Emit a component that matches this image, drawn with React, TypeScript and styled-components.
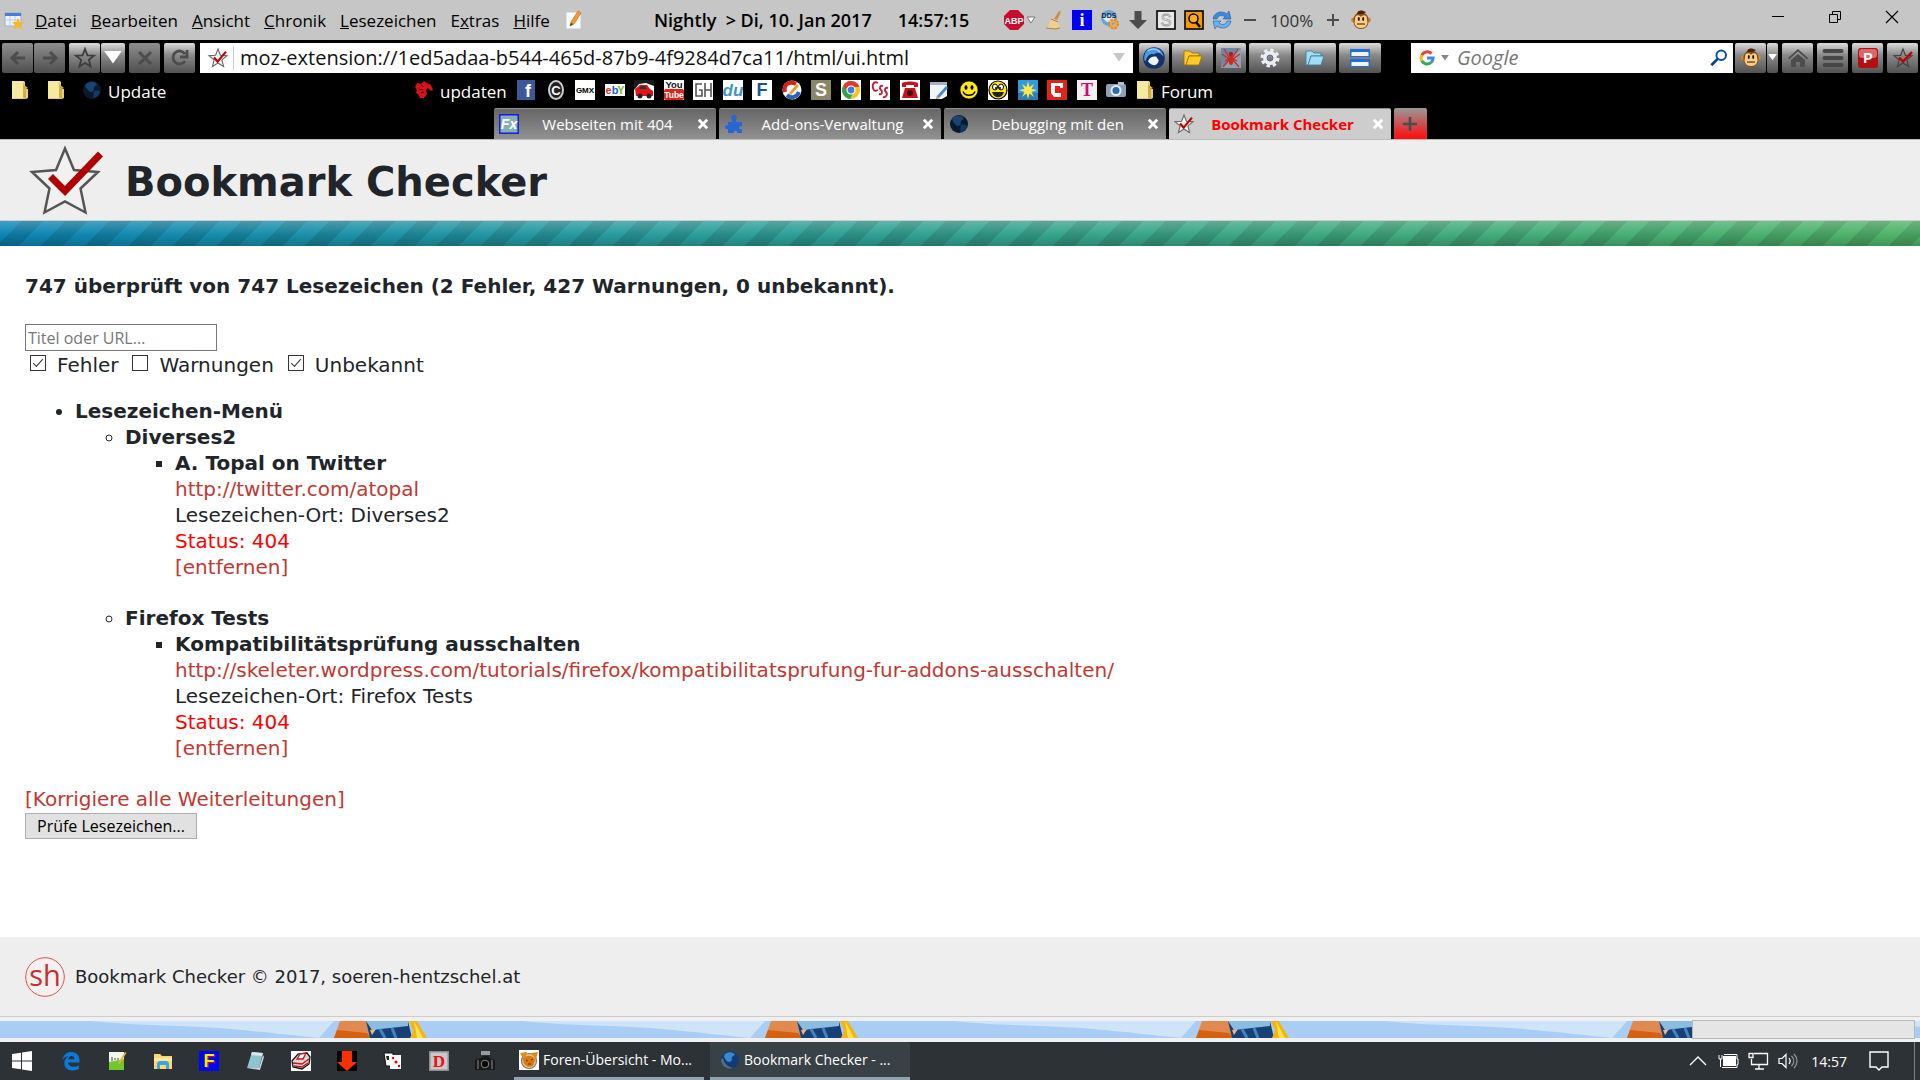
import React, { useState } from 'react';
import styled, { createGlobalStyle, css } from 'styled-components';

const GlobalStyle = createGlobalStyle`
  *, *::before, *::after { box-sizing: border-box; }
  body { margin: 0; background: #fff; font-family: "Open Sans", "Noto Sans", sans-serif; }
  button, input { font: inherit; color: inherit; }
  button { cursor: pointer; }
  ul { margin: 0; padding: 0; list-style: none; }
  svg { flex: none; overflow: visible; }
`;

/* ---------- icons ---------- */

const Svg = ({ size = 20, children }: { size?: number; children: React.ReactNode }) => (
  <svg width={size} height={size} viewBox="0 0 20 20" aria-hidden="true">{children}</svg>
);

const Letters = ({ x = 10, y = 14, s = 10, fill = '#fff', children, serif }: {
  x?: number; y?: number; s?: number; fill?: string; children: string; serif?: boolean;
}) => (
  <text x={x} y={y} fontSize={s} fill={fill} fontWeight="bold" textAnchor="middle"
    fontFamily={serif ? '"Liberation Serif", serif' : '"Liberation Sans", sans-serif'}>{children}</text>
);

const STAR = '10,1 12.4,7.3 19,7.7 13.9,11.9 15.6,18.6 10,15 4.4,18.6 6.1,11.9 1,7.7 7.6,7.3';

const CheckStar = ({ size = 20 }: { size?: number }) => (
  <Svg size={size}>
    <polygon points={STAR} fill="#f4f4f4" stroke="#666" strokeWidth="1.1" />
    <path d="M6 9.5 L9.6 13.6 L18 3.6" fill="none" stroke="#c00000" strokeWidth="2.2" />
  </Svg>
);

const Folder = () => (
  <Svg>
    <path d="M2 1h12l1 1v7h3v9l-2 1H2z" fill="#e8cf6e" />
    <path d="M2 1h11v17H2z" fill="#f6e9a0" />
    <path d="M13 4v14l3 1V9l2-1" fill="#cfae46" />
  </Svg>
);

const Globe = () => (
  <Svg>
    <circle cx="10" cy="10" r="9" fill="#0a1a2e" />
    <path d="M4 4c4-3 9-3 11 1-3 1-4 3-3 5-2 3-5 2-6 0S2 7 4 4z" fill="#1a4474" />
    <path d="M12 11c3-1 5 0 6 1-1 3-4 6-7 6 1-3 0-5 1-7z" fill="#123a66" />
  </Svg>
);

const BrightGlobe = () => (
  <Svg>
    <circle cx="10" cy="10" r="9" fill="#123c78" />
    <path d="M5 4c4-3 9-2 10 1-3 1-4 3-3 5-2 3-5 2-6 0S3 7 5 4z" fill="#3b88c9" />
    <path d="M1 10a9 9 0 0 0 12 8C8 17 4 14 3 8z" fill="#5b6c7c" />
  </Svg>
);

const Monkey = () => (
  <Svg>
    <circle cx="2.500" cy="10" r="2.400" fill="#c98732" /><circle cx="17.500" cy="10" r="2.400" fill="#c98732" />
    <path d="M2.500 11C2 5 6 2.500 10 2.500S18 5 17.500 11c0 5-3 8-7.500 8s-7.500-3-7.500-8z" fill="#8a4d18" />
    <path d="M6 4c0-3 3-4 5-3.500L15 2l-3 2z" fill="#4a2307" />
    <path d="M4 9c0-5 5-4 6-2 1-2 6-3 6 2 0 2 1 3.500 0 5.500-1 2.500-3 3.500-6 3.500s-5-1-6-3.500C3 12.500 4 11 4 9z" fill="#f8cf85" />
    <ellipse cx="7.800" cy="9" rx="1" ry="2" fill="#241104" /><ellipse cx="12.200" cy="9" rx="1" ry="2" fill="#241104" />
    <path d="M6 14h8" stroke="#5c2f10" strokeWidth="1.200" />
  </Svg>
);

const MenuTable = () => (
  <Svg>
    <rect x="1" y="3" width="16" height="13" fill="#eef4fc" stroke="#8fb0de" />
    <path d="M1 3h16v3H1z" fill="#4a7fd0" /><path d="M6 6v10M11 6v10M1 10h16" stroke="#b7cbe8" />
    <polygon points="14,8 15.800,12 20,12.300 17,15 18,19.500 14,17 10,19.500 11,15 8,12.300 12.200,12" fill="#fbb917" />
  </Svg>
);

const NotePencil = () => (
  <Svg>
    <path d="M2 2h12l3 3v14H2z" fill="#fbfbfd" stroke="#c2c7d2" />
    <path d="M6 16l1-4L14 1l3 2-7 11z" fill="#f59a23" stroke="#b56813" strokeWidth=".6" /><path d="M6 16l1-3 2 1z" fill="#333" />
  </Svg>
);

const Abp = () => (
  <Svg>
    <polygon points="6,0 14,0 20,6 20,14 14,20 6,20 0,14 0,6" fill="#c70d2c" />
    <Letters y={13.5} s={9}>ABP</Letters>
  </Svg>
);
const Broom = () => (
  <Svg>
    <path d="M15 1l2 1-4 8-3-1z" fill="#c98d4a" />
    <path d="M7 8l7 3 2 7-5 1-9-1c3-2 4-5 5-10z" fill="#efd08c" /><path d="M2 18l9 1 5-1M7 9l7 3" stroke="#b07a5a" fill="none" />
  </Svg>
);
const Info = () => (<Svg><rect width="20" height="20" fill="#0000f5" /><Letters y={16} s={18} serif>i</Letters></Svg>);
const Dds = () => (
  <Svg>
    <circle cx="9" cy="8" r="8" fill="#62a7d8" /><path d="M3 8c3-4 8-4 12 0-1 5-8 7-12 0z" fill="#d7ecf8" />
    <Letters x={9} y={8} s={7} fill="#223">DDS</Letters>
    <circle cx="13.500" cy="14" r="4" fill="none" stroke="#e58a1c" strokeWidth="3" strokeDasharray="2.300 .8" /><circle cx="13.500" cy="14" r="2.600" fill="none" stroke="#f3a73b" strokeWidth="2" />
  </Svg>
);
const DownArrow = () => (<Svg><path d="M6.500 1h7v9H19l-9 9-9-9h5.500z" fill="#4c4c4c" /></Svg>);
const SBox = () => (
  <Svg><rect x="1" y="1" width="18" height="18" fill="#e8e8e8" stroke="#000" strokeWidth="1.600" /><text x="10" y="16" fontSize="16" textAnchor="middle" fill="#fff" stroke="#999" strokeWidth=".8" fontFamily="Liberation Sans">S</text></Svg>
);
const SearchBox = () => (
  <Svg><rect x="1" y="1" width="18" height="18" fill="#f79a00" stroke="#000" strokeWidth="1.600" /><circle cx="9.500" cy="8.500" r="4.500" fill="#ffae1c" stroke="#000" strokeWidth="1.500" /><path d="M12 12l4 5" stroke="#000" strokeWidth="2.400" /></Svg>
);
const Refresh = () => (
  <Svg>
    <path d="M1 9c1-7 9-9 14-5l2-3 2 8-8 0 2-2C9 4 6 6 5 9z" fill="#3a8be0" stroke="#1c5aa8" strokeWidth=".6" />
    <path d="M19 11c-1 7-9 9-14 5l-2 3-2-8h8l-2 2c4 3 7 1 8-2z" fill="#69b1f2" stroke="#1c5aa8" strokeWidth=".6" />
  </Svg>
);

const Line = ({ d, color = '#4c4c4c', w = 2.5 }: { d: string; color?: string; w?: number }) => (
  <Svg><path d={d} fill="none" stroke={color} strokeWidth={w} /></Svg>
);

const Thunder = () => (
  <Svg size={24}><path d="M10 1c5 0 9 3 9 9s-4 9-9 9c-6 0-9-4-9-9 0-3 1-5 3-7 2-1 3-2 6-2z" fill="#12346a" /><path d="M3 5C7-1 17 1 18 9c-3-4-6-4-8-2-3-1-6 1-7 6-2-2-1-5 0-8z" fill="#4c9be0" /><path d="M5 13c1-3 3-5 7-4l2 3c-1 4-5 6-9 1z" fill="#eef1f4" /><path d="M5 4c3-2 7-2 10 1" stroke="#a9d4f7" fill="none" /></Svg>
);
const OpenFolder = ({ c, d }: { c: string; d: string }) => (
  <Svg><path d="M1 3h6l2 2h7v3H6L3 17H1z" fill={c} stroke={d} strokeWidth=".8" /><path d="M6 8h13l-3 9H3z" fill={c} stroke={d} strokeWidth=".8" /></Svg>
);
const Spider = () => (
  <Svg><path d="M0 0h20v20H0z" fill="#6d89a8" /><path d="M0 20L20 0v20z" fill="#8ea2b6" /><path d="M3 1l5 8M17 1l-5 8M1 6l7 5M19 6l-7 5M2 19l6-7M18 19l-6-7M4 13l5-3M16 13l-5-3" stroke="#d4281c" strokeWidth="1.300" /><ellipse cx="10" cy="12" rx="2.400" ry="5" fill="#d4281c" /><circle cx="10" cy="6" r="2.200" fill="#b51d14" /></Svg>
);
const Gear = () => (
  <Svg><circle cx="10" cy="10" r="8" fill="none" stroke="#e9eef4" strokeWidth="3" strokeDasharray="3.400 2.883" /><circle cx="10" cy="10" r="5" fill="none" stroke="#e9eef4" strokeWidth="4" /><circle cx="10" cy="10" r="3" fill="none" stroke="#5f6b78" /></Svg>
);
const Panels = () => (
  <Svg><path d="M0 1h20v8H0zM0 11h20v8H0z" fill="#1e6fe0" /><path d="M1.500 4h17v4h-17zM1.500 14h17v4h-17z" fill="#eef5ff" /><path d="M16 2h2M16 12h2" stroke="#e33" strokeWidth="1.500" /></Svg>
);
const Google = () => (
  <Svg size={16}><g fill="none" strokeWidth="3.800"><path d="M3.400 6.500A7.600 7.600 0 0 1 15.600 4.600" stroke="#ea4335" /><path d="M3.400 6.500a7.600 7.600 0 0 0 0 7" stroke="#fbbc05" /><path d="M3.400 13.500A7.600 7.600 0 0 0 15 15.700" stroke="#34a853" /><path d="M15 15.700A7.600 7.600 0 0 0 17.600 10H10" stroke="#4285f4" /></g></Svg>
);
const Magnifier = () => (<Svg size={18}><circle cx="12.500" cy="7" r="5.300" fill="none" stroke="#0a50a8" strokeWidth="2.200" /><path d="M8.500 11L1.500 18" stroke="#0a3f8c" strokeWidth="3" /></Svg>);
const Home = () => (<Svg><path d="M10 1l10 9-1 1.500-9-8-9 8L0 10z" fill="#4c4c4c" /><path d="M10 6l7 6v7h-5v-5H8v5H3v-7z" fill="#4c4c4c" /></Svg>);
const Burger = () => (<Svg><path d="M1.500 3h17M1.500 10h17M1.500 17h17" stroke="#474747" strokeWidth="4" strokeLinecap="round" /></Svg>);
const PBox = () => (<Svg><rect width="20" height="20" rx="3" fill="#b40d12" /><rect x="1" y="1" width="18" height="9" rx="3" fill="#d9686a" /><Letters y={15} s={14}>P</Letters></Svg>);

/* bookmark bar favicons */
const Horse = () => (<Svg><path d="M3 3l4 1 3-3 3 2 4 2 2 5-2 1-3-3-2 2 1 4-3 4H6l-1-3-3-2 1-3-2-3z" fill="#d8121a" /><path d="M7 5l3 2M5 9l4 1M7 13l3-1" stroke="#560307" /></Svg>);
const Fb = () => (<Svg><rect x="1" width="18" height="20" fill="#3b5998" /><Letters x={12} y={17} s={18}>f</Letters></Svg>);
const Copy = () => (<Svg><ellipse cx="10" cy="10" rx="7" ry="9" fill="#222" stroke="#ccc" strokeWidth="2" /><Letters y={14.5} s={13}>C</Letters></Svg>);
const Tile = ({ bg = '#fff', fg, s, y, children, serif }: { bg?: string; fg: string; s: number; y: number; children: string; serif?: boolean }) => (
  <Svg><rect width="20" height="20" fill={bg} /><Letters y={y} s={s} fill={fg} serif={serif}>{children}</Letters></Svg>
);
const Du = () => (<Svg><rect width="20" height="20" fill="#fff" /><text x="10" y="16" fontSize="17" fontStyle="italic" fontWeight="bold" fill="#3c97c8" textAnchor="middle" fontFamily="Liberation Sans">du</text></Svg>);
const Gh = () => (<Svg><rect width="20" height="20" fill="#fff" /><path d="M9 4H3v12h6v-6H6M12 3v14M18 3v14M12 10h6" fill="none" stroke="#555" strokeWidth="1.600" /></Svg>);
const Ebay = () => (<Svg><rect y="4" width="20" height="12" fill="#fff" /><Letters x={3.5} y={14} s={11} fill="#e53238">e</Letters><Letters x={10} y={14} s={11} fill="#0064d2">b</Letters><Letters x={16} y={14} s={11} fill="#86b817">Y</Letters></Svg>);
const Car = () => (<Svg><rect width="20" height="20" fill="#fff" /><path d="M0 0h20v6L12 3 5 4 0 10z" fill="#1a1a1a" /><path d="M1 9l5-4h7l3 4 3 2v5H2z" fill="#e01616" /><path d="M7 6h4l2 3H5z" fill="#333" /><circle cx="6" cy="16" r="2.500" fill="#222" /><circle cx="15" cy="16" r="2.500" fill="#222" /></Svg>);
const YouTube = () => (<Svg><rect width="20" height="20" fill="#fff" /><Letters y={8} s={9.5} fill="#111">You</Letters><rect y="9" width="20" height="11" rx="2" fill="#e2231a" /><Letters y={18} s={8.5}>Tube</Letters></Svg>);
const Magnet = () => (<Svg><circle cx="10" cy="10" r="9.500" fill="#fff" /><path d="M3 12C1 4 8 1 14 4" stroke="#d8231d" strokeWidth="4" fill="none" /><path d="M5 15c4 4 10 2 12-3" stroke="#2b62b8" strokeWidth="4" fill="none" /><path d="M7 13l8-9 2 2-8 9z" fill="#f29c2e" /></Svg>);
const Chrome = () => (<Svg><rect width="20" height="20" fill="#fff" /><circle cx="10" cy="10" r="9" fill="#f6c51b" /><path d="M2 6a9 9 0 0 1 16.500 1H10L7 12z" fill="#dd3b2b" /><path d="M2 6a9 9 0 0 0 7 13l3-6-5-1z" fill="#2fa24a" /><circle cx="10" cy="10" r="4" fill="#3d7de0" stroke="#fff" strokeWidth="1.200" /></Svg>);
const Css = () => (<Svg><rect width="20" height="20" fill="#fff" /><path d="M8 3C4 1 2 4 3 8s3 3 5 2M13 6c-3-1-4 2-2 4s1 5-2 4M18 8c-3-1-4 2-2 4s0 6-3 5" fill="none" stroke="#c0203c" strokeWidth="1.900" /></Svg>);
const Phone = () => (<Svg><rect width="20" height="20" fill="#fff" /><path d="M2 3c4-2 12-2 16 0v4h-4V5H6v2H2z" fill="#c4161c" /><path d="M5 8h10l3 10H2z" fill="#c4161c" /><circle cx="10" cy="13" r="3" fill="#4a0508" /></Svg>);
const Clip = () => (<Svg><path d="M1 2h17v14l-5 3H1z" fill="#f1f4f8" /><path d="M1 2h17v3H1z" fill="#9fb2c8" /><path d="M8 16L17 6l2 2-9 10-3 1z" fill="#3f8ae0" /><path d="M7 19l1-3 2 2z" fill="#e9a23a" /></Svg>);
const Smiley = () => (
  <Svg><circle cx="10" cy="10" r="9" fill="#ffe81a" stroke="#000" strokeWidth=".6" /><ellipse cx="7" cy="7.500" rx="1.500" ry="2.300" fill="#000" /><ellipse cx="13" cy="7.500" rx="1.500" ry="2.300" fill="#000" /><path d="M4 11.500c2 5 10 5 12 0" fill="none" stroke="#000" strokeWidth="1.500" /></Svg>
);
const LaughBox = () => (
  <Svg><rect width="20" height="20" fill="#fff" /><circle cx="10" cy="10" r="9" fill="#ffe81a" stroke="#000" strokeWidth="1.200" /><ellipse cx="7" cy="7" rx="2.500" ry="3" fill="#fff" stroke="#000" /><ellipse cx="13" cy="7" rx="2.500" ry="3" fill="#fff" stroke="#000" /><circle cx="8" cy="8" r="1" /><circle cx="12" cy="8" r="1" /><path d="M4 12h12c-2 7-10 7-12 0z" fill="#222" /></Svg>
);
const Sun = () => (<Svg><rect width="20" height="20" fill="#2f9be0" /><rect y="13" width="20" height="7" fill="#2e7cb0" /><polygon points="10,1 11.500,7 16,4 13.500,9 19,10 13.500,12 16,17 11.500,13.500 10,19 8.500,13.500 4,17 6.500,12 1,10 6.500,9 4,4 8.500,7" fill="#ffe84a" /></Svg>);
const CBox = () => (<Svg><rect width="20" height="20" fill="#e2231a" /><path d="M4 3h12v5h-3V6H8v7h6v4H7l-3-4z" fill="#fff" /></Svg>);
const Camera = () => (<Svg><rect y="4" width="20" height="13" rx="2" fill="#8fa2b5" /><rect x="12" y="2" width="6" height="3" fill="#b5c2cf" /><circle cx="10" cy="10.500" r="5.500" fill="#e6edf4" /><circle cx="10" cy="10.500" r="3.500" fill="#2a6ab8" /></Svg>);
const Fx = () => (<Svg><rect x=".8" y=".8" width="18.400" height="18.400" fill="#86b0b8" stroke="#0a16e0" strokeWidth="1.400" /><text x="10" y="15" fontSize="14" fontStyle="italic" fontWeight="bold" fill="#fff" textAnchor="middle" fontFamily="Liberation Sans">Fx</text></Svg>);
const Puzzle = () => (<Svg><path d="M8 5.500a2.800 2.800 0 1 1 4 0V8h6v4.500c-4-1.500-4 4 0 2.500V19h-5c1-3-4-3-3 0H4v-4c-4 1-4-5 0-4V8h4z" fill="#2a66d2" /></Svg>);
const Cross = () => (<Svg size={12}><path d="M3 3l14 14M17 3L3 17" stroke="#fff" strokeWidth="4.600" /></Svg>);

/* taskbar icons */
const Windows = () => (<Svg><path d="M0 3l9-1.300V9.500H0zM10 1.500L20 0v9.500H10zM0 10.500h9v7.800L0 17zM10 10.500h10V20l-10-1.500z" fill="#fff" /></Svg>);
const Edge = () => (<Svg><path d="M1.500 9C2.500 3.500 6 1 10.500 1c5 0 8 3.500 8 8.500v2H7c.2 3 2.500 4.300 5.500 4.300 2 0 3.800-.5 5.300-1.400v3.700C16 19 14 19.500 11.500 19.500 6.500 19.500 3.300 16.500 3.300 12c0-3 1.700-5.500 4.200-6.700C4.800 5.400 2.800 6.800 1.500 9zM7.200 8.300H13.500c0-2-.9-3.300-3-3.300-1.900 0-3 1.300-3.300 3.300z" fill="#0a7bdb" /></Svg>);
const Notepp = () => (<Svg><path d="M2 1h15v18H2z" fill="#f2f6ee" /><path d="M2 11l15-3v11H2z" fill="#74c62f" /><path d="M5 6v4M8 7v2M11 7v2" stroke="#444" /><path d="M11 12L18 1l1.500 1-7 11z" fill="#e9b13a" /></Svg>);
const Explorer = () => (<Svg><path d="M1 3h6l2 2h10v13H1z" fill="#f9d874" /><path d="M1 7h18v3H1z" fill="#fde9a5" /><path d="M4 18v-6l2-2h8l2 2v6h-3v-4H7v4z" fill="#3ba4e4" /></Svg>);
const FYellow = () => (<Svg><rect width="20" height="20" fill="#0008f0" /><Letters x={11} y={17} s={18} fill="#b01010">F</Letters><Letters y={16} s={18} fill="#ffee00">F</Letters></Svg>);
const Notepad = () => (<Svg><path d="M7 1l11 1-4 15-12 0z" fill="#8fc3d2" /><path d="M7 1l11 1-1 3-11-1z" fill="#d8e8ec" /><path d="M2 17l12 0 4-13 1 2-4 13z" fill="#cfd4d6" /></Svg>);
const Printer = () => (<Svg><rect width="20" height="20" fill="#fff" /><path d="M1 10l6-7 9-1 3 4-1 7-7 5-9-2z" fill="#d8d8d8" stroke="#111" strokeWidth="1.300" /><path d="M6 8l3-5 6-1-3 6z" fill="#fff" stroke="#c8141a" strokeWidth="1.300" /><path d="M2 12l9 1 7-5M3 15l8 1 6-4" fill="none" stroke="#c8141a" strokeWidth="1.500" /></Svg>);
const RedArrow = () => (<Svg><rect width="20" height="20" fill="#000" /><path d="M5 0h10v11h5L10 20 0 11h5z" fill="#ff2f00" /></Svg>);
const Cards = () => (<Svg><path d="M1 2h9v13H3z" fill="#fff" stroke="#111" /><path d="M7 4l11 0v14H7z" fill="#fff" /><path d="M3 5h3v4H4z" fill="#222" /><circle cx="10" cy="7" r="1.200" fill="#e00" /><circle cx="13" cy="11" r="1.500" fill="#e00" /><circle cx="16" cy="15" r="1.200" fill="#e00" /></Svg>);
const DBox = () => (<Svg><rect width="20" height="20" fill="#8c8c8c" /><rect x="1.500" y="1.500" width="17" height="17" fill="#c9c9c9" /><Letters y={16} s={17} fill="#ec1010" serif>D</Letters></Svg>);
const Slr = () => (<Svg><path d="M6 0h9v4H6z" fill="#9b9b9b" /><path d="M0 9l6-2 2-2h5l2 2 5 2v10H0z" fill="#17191a" /><circle cx="10" cy="13" r="3.800" fill="#070707" stroke="#888" /><path d="M2 9h2v9H2zM16 9h2v9h-2z" fill="#555" /></Svg>);
const Forum = () => (<Svg><rect width="20" height="20" fill="#fff" /><circle cx="10" cy="11" r="7.500" fill="#f2c27c" stroke="#777" strokeWidth="1.200" /><path d="M1 3l7-1-3 8zM19 2l-7 1 5 6z" fill="#e08a12" /><path d="M4 9c2-5 11-4 12 1l-2 6-5 1-4-3z" fill="#d97a0c" /><path d="M7 10l2 1M12 10l2-1M9 14h3" stroke="#5a2d05" /></Svg>);

/* ---------- browser chrome ---------- */

const Screen = styled.div`
  min-height: 100vh;
  display: flex;
  flex-direction: column;
`;

const Bare = styled.button`
  display: inline-flex;
  align-items: center;
  justify-content: center;
  flex: none;
  border: 0;
  padding: 0;
  background: none;
  svg { display: block; }
`;

const MenuBar = styled.header`
  display: flex;
  align-items: center;
  height: 40px;
  padding-left: 4px;
  background: #c6c6c6;
  color: #000;
  font-size: 17px;
  white-space: nowrap;
`;

const Menus = styled.nav`
  display: flex;
  align-items: center;
  gap: 14px;
  width: 650px;
  flex: none;
  > :first-child { margin-right: -3px; }
`;

const Clock = styled.div`
  display: flex;
  gap: 26px;
  width: 350px;
  flex: none;
  font-size: 18px;
  font-weight: 600;
  line-height: 40px;
  white-space: pre;
`;

const Tools = styled.div`
  display: flex;
  align-items: center;
  gap: 8px;
`;

const Zoom = styled.span`
  padding: 0 2px;
  color: #333;
`;

const AbpTool = styled(Bare)`
  gap: 2px;
`;

const WindowControls = styled.div`
  display: flex;
  align-self: flex-start;
  margin-left: auto;
`;

const WindowButton = styled(Bare)`
  width: 57px;
  height: 34px;
`;

const NavBar = styled.div`
  display: flex;
  align-items: center;
  height: 35px;
  padding: 0 2px;
  background: #000;
`;

const Group = styled.div<{ $gap?: number; $left?: number }>`
  display: flex;
  flex: none;
  gap: ${p => p.$gap ?? 4}px;
  margin-left: ${p => p.$left ?? 0}px;
`;

const ToolButton = styled(Bare)<{ $w?: number; $dim?: boolean }>`
  width: ${p => p.$w ?? 31}px;
  height: 30px;
  border-radius: 2px;
  background: ${p => p.$dim
    ? 'linear-gradient(#8e8e8e, #4e4e4e)'
    : 'linear-gradient(#dcdcdc, #8a8a8a 40%, #525252)'};
`;

const fieldBox = css`
  display: flex;
  align-items: center;
  height: 30px;
  background: #fff;
`;

const UrlBox = styled.div`
  ${fieldBox}
  flex: 1;
  min-width: 0;
  margin: 0 6px 0 5px;
  padding: 0 8px;
`;

const UrlInput = styled.input`
  flex: 1;
  min-width: 0;
  height: 24px;
  margin-left: 5px;
  padding: 0 0 0 6px;
  border: 0;
  border-left: 1px solid #ccc;
  outline: 0;
  background: none;
  color: #111;
  font-size: 20px;
`;

const SearchBoxField = styled.div`
  ${fieldBox}
  width: 322px;
  flex: none;
  gap: 6px;
  margin: 0 2px 0 30px;
  padding: 0 5px 0 8px;
`;

const SearchInput = styled.input`
  flex: 1;
  min-width: 0;
  height: 28px;
  margin-left: 2px;
  padding: 0;
  border: 0;
  outline: 0;
  background: none;
  font-size: 20px;
  font-style: italic;
  &::placeholder { color: #777; opacity: 1; }
`;

const BookmarkBar = styled.nav`
  display: flex;
  align-items: center;
  height: 33px;
  padding-left: 10px;
  background: #000;
  color: #fff;
  font-size: 17px;
  white-space: nowrap;
`;

const BookmarkGroup = styled.div<{ $width: number; $spread?: boolean }>`
  display: flex;
  align-items: center;
  flex: none;
  justify-content: ${p => (p.$spread ? 'space-between' : 'flex-start')};
  gap: ${p => (p.$spread ? 0 : 16)}px;
  width: ${p => p.$width}px;
  margin-right: ${p => (p.$spread ? 9 : 0)}px;
`;

const Bookmark = styled.a`
  display: inline-flex;
  align-items: center;
  gap: 6px;
  color: #fff;
  text-decoration: none;
  svg { display: block; margin-bottom: 3px; }
`;

const TabStrip = styled.div`
  display: flex;
  justify-content: center;
  gap: 3px;
  height: 31px;
  background: #000;
`;

const Tab = styled.div<{ $active?: boolean }>`
  display: flex;
  align-items: center;
  gap: 6px;
  width: 222px;
  padding: 0 7px 0 5px;
  border-top: 1px solid #8f8f8f;
  border-radius: 2px 2px 0 0;
  background: ${p => (p.$active ? '#cdcdcd' : 'linear-gradient(#666, #929292)')};
  color: ${p => (p.$active ? '#f00' : '#fff')};
  font-size: 15px;
  font-weight: ${p => (p.$active ? 700 : 400)};
  white-space: nowrap;
`;

const TabLabel = styled.span`
  flex: 1;
  text-align: center;
`;

const NewTab = styled(Bare)`
  width: 33px;
  border-radius: 2px 2px 0 0;
  background: linear-gradient(#999, #ff0a0a);
`;

/* ---------- page ---------- */

const PageHeader = styled.div`
  display: flex;
  align-items: center;
  gap: 20px;
  height: 82px;
  padding: 0 25px;
  border-top: 1px solid #bbb;
  border-bottom: 1px solid #ccc;
  background: #eee;
  svg { display: block; flex: none; }
`;

const Title = styled.h1`
  margin: 3px 0 0;
  color: #212529;
  font: bold 40px/50px Verdana, "DejaVu Sans", sans-serif;
`;

const Stripes = styled.div`
  height: 25px;
  background:
    linear-gradient(rgba(255, 255, 255, .22), rgba(255, 255, 255, 0) 55%, rgba(0, 0, 0, .18)),
    linear-gradient(135deg, transparent 25%, rgba(0, 0, 0, .12) 25%, rgba(0, 0, 0, .12) 50%, transparent 50%, transparent 75%, rgba(0, 0, 0, .12) 75%) 0 0 / 44px 44px,
    linear-gradient(90deg, #0c84b4, #2a9d9c 35%, #50b468);
`;

const Page = styled.main`
  flex: 1;
  padding: 27px 25px 40px;
  color: #212529;
  font: 20px/26px Verdana, "DejaVu Sans", sans-serif;
`;

const Summary = styled.p`
  margin: 0 0 25px;
  font-weight: bold;
`;

const FilterInput = styled.input`
  display: block;
  width: 192px;
  height: 27px;
  padding: 0 2px;
  border: 1px solid #777;
  font: 16px/24px "Open Sans", "Noto Sans", sans-serif;
  &::placeholder { color: #777; opacity: 1; }
`;

const Filters = styled.div`
  display: flex;
  gap: 14px;
  margin: 1px 0 20px 5px;
`;

const Check = styled.label`
  display: flex;
  gap: 11px;
`;

const Box = styled.input`
  appearance: none;
  width: 16px;
  height: 16px;
  margin: 3px 0 0;
  border: 1px solid #333;
  background: #fff;
  &:checked::after {
    content: "";
    display: block;
    width: 10px;
    height: 5px;
    margin: 3px 0 0 2px;
    border: solid #333;
    border-width: 0 0 1px 1px;
    transform: rotate(-48deg);
  }
`;

const Tree = styled.ul<{ $marker: string }>`
  padding-left: 50px;
  list-style: ${p => p.$marker};
`;

const Name = styled.strong`
  display: block;
`;

const Entry = styled.li`
  margin-bottom: 25px;
`;

const RedLink = styled.a`
  color: #c13832;
  text-decoration: none;
`;

const Status = styled.div`
  color: #f00;
`;

const CheckButton = styled.button`
  display: block;
  height: 26px;
  margin-top: 1px;
  padding: 0 11px;
  border: 1px solid #adadad;
  background: #e1e1e1;
  color: #000;
  font: 16px/24px "Open Sans", "Noto Sans", sans-serif;
`;

const Footer = styled.footer`
  display: flex;
  align-items: center;
  gap: 10px;
  height: 80px;
  padding: 0 25px;
  border-bottom: 1px solid #ccc;
  background: #eee;
  color: #212529;
  font: 18px/24px Verdana, "DejaVu Sans", sans-serif;
`;

const AddonBar = styled.div`
  position: relative;
  display: flex;
  justify-content: flex-end;
  height: 25px;
  padding: 3px 5px;
  background: #f0f0f0;
`;

const Wallpaper = styled.svg`
  position: absolute;
  left: 0;
  top: 4px;
  width: 100%;
  height: 17px;
`;

const StatusBox = styled.div`
  position: relative;
  width: 223px;
  border: 1px solid #b9b9b9;
  background: #e5e5e5;
`;

/* ---------- taskbar ---------- */

const Taskbar = styled.div`
  display: flex;
  height: 38px;
  background: #2d3236;
  color: #fff;
  font-size: 14px;
  white-space: nowrap;
`;

const Launcher = styled(Bare)<{ $first?: boolean }>`
  width: ${p => (p.$first ? 48 : 46)}px;
  padding-right: ${p => (p.$first ? 4 : 0)}px;
`;

const Task = styled.button<{ $active?: boolean }>`
  display: flex;
  align-items: center;
  gap: 4px;
  width: ${p => (p.$active ? 200 : 190)}px;
  margin-left: 6px;
  padding: ${p => (p.$active ? '0 10px' : '0 5px')};
  border: 0;
  border-bottom: 3px solid #91a3ae;
  background: ${p => (p.$active ? '#384145' : 'transparent')};
`;

const Tray = styled.div`
  display: flex;
  align-items: center;
  gap: 10px;
  margin-left: auto;
`;

const Peek = styled(Bare)`
  align-self: stretch;
  width: 6px;
  margin-left: 15px;
  border-left: 1px solid #7c8083;
`;

const Time = styled.time`
  padding: 0 12px 0 3px;
`;

const menus: [string, string, string][] = [
  ['', 'D', 'atei'], ['', 'B', 'earbeiten'], ['', 'A', 'nsicht'], ['', 'C', 'hronik'],
  ['', 'L', 'esezeichen'], ['E', 'x', 'tras'], ['', 'H', 'ilfe'],
];

const favicons: [string, React.ReactNode][] = [
  ['Facebook', <Fb />], ['Copyright', <Copy />],
  ['GMX', <Tile fg="#000" s={8} y={13}>GMX</Tile>],
  ['eBay', <Ebay />], ['Auto', <Car />], ['YouTube', <YouTube />],
  ['GH', <Gh />], ['du', <Du />],
  ['F', <Tile fg="#17559c" s={18} y={16}>F</Tile>],
  ['Magnet', <Magnet />],
  ['S', <Tile bg="#8b8668" fg="#fff" s={18} y={16}>S</Tile>],
  ['Chrome', <Chrome />], ['CSS', <Css />],
  ['Telefon', <Phone />], ['Notizen', <Clip />], ['Smiley', <Smiley />], ['Smileys', <LaughBox />],
  ['Wetter', <Sun />], ['C', <CBox />],
  ['Telekom', <Tile bg="#f1f1f1" fg="#e20074" s={18} y={16} serif>T</Tile>],
  ['Kamera', <Camera />],
];

const tabs: [string, React.ReactNode][] = [
  ['Webseiten mit 404', <Fx />], ['Add-ons-Verwaltung', <Puzzle />],
  ['Debugging mit den', <Globe />], ['Bookmark Checker', <CheckStar />],
];

const launchers: [string, React.ReactNode][] = [
  ['Start', <Windows />], ['Edge', <Edge />], ['Notepad++', <Notepp />], ['Explorer', <Explorer />],
  ['F', <FYellow />], ['Editor', <Notepad />], ['Drucker', <Printer />], ['Download', <RedArrow />],
  ['Karten', <Cards />], ['D', <DBox />], ['Kamera', <Slr />],
];

const folders = [
  { name: 'Diverses2', title: 'A. Topal on Twitter', url: 'http://twitter.com/atopal' },
  {
    name: 'Firefox Tests', title: 'Kompatibilitätsprüfung ausschalten',
    url: 'http://skeleter.wordpress.com/tutorials/firefox/kompatibilitatsprufung-fur-addons-ausschalten/',
  },
];

const Caret = ({ color = '#fff', w = 14 }: { color?: string; w?: number }) => (
  <svg width={w} height={w * 0.7} viewBox="0 0 14 10" aria-hidden="true"><path d="M0 0h14L7 10z" fill={color} /></svg>
);

export default function App() {
  const [filters, setFilters] = useState({ Fehler: true, Warnungen: false, Unbekannt: true });

  return (
    <Screen>
      <GlobalStyle />
      <MenuBar>
        <Menus>
          <Bare aria-label="Lesezeichen"><MenuTable /></Bare>
          {menus.map(([a, k, b]) => <Bare key={k}><span>{a}<u>{k}</u>{b}</span></Bare>)}
          <Bare aria-label="Notiz"><NotePencil /></Bare>
        </Menus>
        <Clock><span>{'Nightly  > Di, 10. Jan 2017'}</span><span>14:57:15</span></Clock>
        <Tools>
          <AbpTool aria-label="Adblock Plus"><Abp /><svg width="10" height="8" viewBox="0 0 10 8"><path d="M1 1h8L5 7z" fill="#fff" stroke="#777" /></svg></AbpTool>
          <Bare aria-label="Aufräumen"><Broom /></Bare>
          <Bare aria-label="Info"><Info /></Bare>
          <Bare aria-label="DDS"><Dds /></Bare>
          <Bare aria-label="Downloads"><DownArrow /></Bare>
          <Bare aria-label="Stylish"><SBox /></Bare>
          <Bare aria-label="Suchen"><SearchBox /></Bare>
          <Bare aria-label="Neu starten"><Refresh /></Bare>
          <Bare aria-label="Verkleinern"><Line d="M4 10h12" w={2} /></Bare>
          <Zoom>100%</Zoom>
          <Bare aria-label="Vergrößern"><Line d="M4 10h12M10 4v12" w={2} /></Bare>
          <Bare aria-label="Greasemonkey"><Monkey /></Bare>
        </Tools>
        <WindowControls>
          <WindowButton aria-label="Minimieren"><Line d="M4 9.500h12" color="#000" w={1} /></WindowButton>
          <WindowButton aria-label="Wiederherstellen"><Line d="M4.500 7.500h8v8h-8zM7.500 7.500v-3h8v8h-3" color="#000" w={1} /></WindowButton>
          <WindowButton aria-label="Schließen"><Line d="M4 4l12 12M16 4L4 16" color="#000" w={1.2} /></WindowButton>
        </WindowControls>
      </MenuBar>

      <NavBar>
        <Group $gap={1}>
          <ToolButton $dim aria-label="Zurück"><Line d="M17 10H4M10 4l-6 6 6 6" w={3} /></ToolButton>
          <ToolButton $dim aria-label="Vor"><Line d="M3 10h13M10 4l6 6-6 6" w={3} /></ToolButton>
        </Group>
        <Group $gap={1} $left={4}>
          <ToolButton aria-label="Lesezeichen setzen"><Svg><polygon points={STAR} fill="none" stroke="#3d3d3d" strokeWidth="1.800" /></Svg></ToolButton>
          <ToolButton $w={24} aria-label="Lesezeichenliste"><Caret w={18} /></ToolButton>
        </Group>
        <Group $left={4}>
          <ToolButton $dim aria-label="Stopp"><Line d="M4 4l12 12M16 4L4 16" w={3} /></ToolButton>
          <ToolButton aria-label="Neu laden"><Line d="M15 13A6.500 6.500 0 1 1 15 6M17 2v7h-7" w={2.8} /></ToolButton>
        </Group>
        <UrlBox>
          <CheckStar />
          <UrlInput aria-label="Adresse" defaultValue="moz-extension://1ed5adaa-b544-465d-87b9-4f9284d7ca11/html/ui.html" />
          <Caret color="#c6c6c6" w={12} />
        </UrlBox>
        <Group $gap={3}>
          <ToolButton $w={30} aria-label="Thunderbird"><Thunder /></ToolButton>
          <ToolButton $w={41} aria-label="Ordner"><OpenFolder c="#ffc928" d="#a06c00" /></ToolButton>
          <ToolButton $w={30} aria-label="Spider"><Spider /></ToolButton>
          <ToolButton $w={42} aria-label="Einstellungen"><Gear /></ToolButton>
          <ToolButton $w={42} aria-label="Profilordner"><OpenFolder c="#a5dcf2" d="#2d7ba4" /></ToolButton>
          <ToolButton $w={42} aria-label="Fenster"><Panels /></ToolButton>
        </Group>
        <SearchBoxField>
          <Google />
          <Caret color="#888" w={8} />
          <SearchInput aria-label="Suche" placeholder="Google" />
          <Bare aria-label="Suche starten"><Magnifier /></Bare>
        </SearchBoxField>
        <Group $gap={1}>
          <ToolButton aria-label="Greasemonkey"><Monkey /></ToolButton>
          <ToolButton $w={11} aria-label="Skripte"><Caret w={9} /></ToolButton>
        </Group>
        <Group $left={4}>
          <ToolButton aria-label="Startseite"><Home /></ToolButton>
          <ToolButton aria-label="Menü"><Burger /></ToolButton>
          <ToolButton aria-label="Passwörter"><PBox /></ToolButton>
          <ToolButton aria-label="Bookmark Checker"><Svg><polygon points={STAR} fill="none" stroke="#444" strokeWidth="1.200" /><path d="M6 9.500l4 4 9-9.500" fill="none" stroke="#c00000" strokeWidth="2.400" /></Svg></ToolButton>
        </Group>
      </NavBar>

      <BookmarkBar>
        <BookmarkGroup $width={404}>
          <Bookmark href="#" aria-label="Ordner"><Folder /></Bookmark>
          <Bookmark href="#" aria-label="Ordner"><Folder /></Bookmark>
          <Bookmark href="#"><Globe />Update</Bookmark>
        </BookmarkGroup>
        <BookmarkGroup $width={102}>
          <Bookmark href="#"><Horse />updaten</Bookmark>
        </BookmarkGroup>
        <BookmarkGroup $width={610} $spread>
          {favicons.map(([label, icon]) => <Bookmark key={label} href="#" aria-label={label}>{icon}</Bookmark>)}
        </BookmarkGroup>
        <Bookmark href="#"><Folder />Forum</Bookmark>
      </BookmarkBar>

      <TabStrip>
        {tabs.map(([label, icon], i) => (
          <Tab key={label} $active={i === 3}>
            {icon}<TabLabel>{label}</TabLabel><Bare aria-label="Tab schließen"><Cross /></Bare>
          </Tab>
        ))}
        <NewTab aria-label="Neuer Tab"><Line d="M3 10h14M10 3v14" /></NewTab>
      </TabStrip>

      <PageHeader>
        <svg width="80" height="80" viewBox="0 0 80 80" aria-hidden="true">
          <polygon points="40,8.500 49,30 73,32 55.500,48.500 60.500,72.500 40,61.500 19.500,72.500 24.500,48.500 7,32 31,30" fill="#f1f1f1" stroke="#555" strokeWidth="2.500" />
          <path d="M25.500 36.500L40 51L75.500 14" fill="none" stroke="#b00000" strokeWidth="7" />
        </svg>
        <Title>Bookmark Checker</Title>
      </PageHeader>
      <Stripes />

      <Page>
        <Summary>747 überprüft von 747 Lesezeichen (2 Fehler, 427 Warnungen, 0 unbekannt).</Summary>
        <FilterInput aria-label="Titel oder URL" placeholder="Titel oder URL..." />
        <Filters>
          {(Object.keys(filters) as (keyof typeof filters)[]).map(key => (
            <Check key={key}>
              <Box type="checkbox" checked={filters[key]} onChange={e => setFilters({ ...filters, [key]: e.target.checked })} />
              {key}
            </Check>
          ))}
        </Filters>
        <Tree $marker="disc">
          <li>
            <Name>Lesezeichen-Menü</Name>
            <Tree $marker="circle">
              {folders.map(f => (
                <li key={f.name}>
                  <Name>{f.name}</Name>
                  <Tree $marker="square">
                    <Entry>
                      <Name>{f.title}</Name>
                      <RedLink href={f.url}>{f.url}</RedLink>
                      <div>Lesezeichen-Ort: {f.name}</div>
                      <Status>Status: 404</Status>
                      <RedLink href="#">[entfernen]</RedLink>
                    </Entry>
                  </Tree>
                </li>
              ))}
            </Tree>
          </li>
        </Tree>
        <RedLink href="#">[Korrigiere alle Weiterleitungen]</RedLink>
        <CheckButton>Prüfe Lesezeichen...</CheckButton>
      </Page>

      <Footer>
        <svg width="40" height="40" viewBox="0 0 40 40" aria-hidden="true">
          <circle cx="20" cy="20" r="19.300" fill="#f5f1f1" stroke="#d9534f" />
          <text x="20" y="29" fontSize="29" textAnchor="middle" fill="#c4302b" fontFamily='"Open Sans", sans-serif'>sh</text>
        </svg>
        Bookmark Checker © 2017, soeren-hentzschel.at
      </Footer>

      <AddonBar>
        <Wallpaper aria-hidden="true">
          <defs>
            <pattern id="persona" width="431" height="17" patternUnits="userSpaceOnUse">
              <rect width="431" height="17" fill="#a9cdf5" />
              <path d="M90 0h244l-15 17C270 12 240 8 200 6S130 4 90 0z" fill="#cfe3f9" />
              <path d="M340 0h28l4 17h-38z" fill="#e08a52" />
              <path d="M334 17l3-8 30 3 4 5z" fill="#d5600f" />
              <path d="M366 0h42l4 17h-42z" fill="#173f78" />
              <path d="M366 0h42v5l-36 4z" fill="#8abde0" />
              <path d="M370 9l6-1-4 6z" fill="#f0b48a" />
              <path d="M380 8l5 9M392 7l4 10" stroke="#3f86c0" strokeWidth="3" />
              <path d="M409 0h8l10 17h-17l3-7z" fill="#f4b415" />
              <path d="M414 0l9 17h-6z" fill="#ffe14a" />
            </pattern>
          </defs>
          <rect width="100%" height="17" fill="url(#persona)" />
        </Wallpaper>
        <StatusBox />
      </AddonBar>

      <Taskbar>
        {launchers.map(([label, icon], i) => <Launcher key={label} $first={i === 0} aria-label={label}>{icon}</Launcher>)}
        <Task><Forum />Foren-Übersicht - Mo...</Task>
        <Task $active><BrightGlobe />Bookmark Checker - ...</Task>
        <Tray>
          <Bare aria-label="Ausgeblendete Symbole"><Line d="M2 14l8-8 8 8" color="#fff" w={1.4} /></Bare>
          <Bare aria-label="Akku"><Svg><path d="M5 5h13v10H5z" fill="#fff" /><path d="M4 16.500h15v-3h1V8h-1V3.500H6M1 4v4h3V4M2.500 8v8" fill="none" stroke="#fff" /></Svg></Bare>
          <Bare aria-label="Netzwerk"><Line d="M6 2.500h13.500v11H3.500V8M1 2.500h4v4H1zM11 13.500v4M7 18h9" color="#fff" w={1.3} /></Bare>
          <Bare aria-label="Lautstärke"><Svg><path d="M1 7.500h3l4-4v13l-4-4H1z" fill="none" stroke="#fff" strokeWidth="1.200" /><path d="M11 7c1.500 2 1.500 4 0 6" fill="none" stroke="#fff" strokeWidth="1.200" /><path d="M13.500 5c3 3 3 7 0 10M16 3c4 4 4 10 0 14" fill="none" stroke="#999" strokeWidth="1.200" /></Svg></Bare>
          <Time>14:57</Time>
          <Bare aria-label="Benachrichtigungen"><Line d="M1 1h18v15h-6l-3 3-3-3H1z" color="#fff" w={1.4} /></Bare>
          <Peek aria-label="Desktop anzeigen" />
        </Tray>
      </Taskbar>
    </Screen>
  );
}
